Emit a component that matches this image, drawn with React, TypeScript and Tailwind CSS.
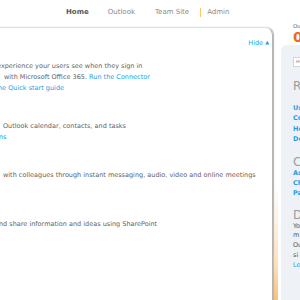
import React from "react";

const link = "text-[#1e9ede]";

function Line({ ml, children }: { ml: string; children: React.ReactNode }) {
  return <div className={`whitespace-nowrap h-[11px] leading-[11px] ${ml}`}>{children}</div>;
}

export default function App() {
  return (
    <div
      className="relative w-[300px] h-[300px] overflow-hidden bg-white text-[#5f5f5f]"
      style={{ fontFamily: '"DejaVu Sans", Verdana, sans-serif' }}
    >
      {/* top nav */}
      <div className="flex items-center h-[22px] pl-[66px] pt-[2px] text-[7px] leading-[10px] text-[#8a8a8a]">
        <span className="font-bold text-[#5a5a5a]">Home</span>
        <span className="ml-[19px]">Outlook</span>
        <span className="ml-[20px]">Team Site</span>
        <span className="ml-[11px] w-[1px] h-[9px] bg-[#f6c66e]" />
        <span className="ml-[6px]">Admin</span>
      </div>

      <div className="flex items-start">
        {/* main card */}
        <div className="relative shrink-0 mt-[5px] ml-[-10px] w-[283px] h-[300px] border-t border-r border-t-[#dedede] border-r-[#b4b4b4] rounded-tr-[8px] shadow-[1px_0_1px_rgba(0,0,0,0.3)] text-[6.5px] pl-[10px]">
          <div className="flex justify-end pr-[3px] pt-[9px] h-[20px] leading-[11px]">
            <span className={link}>
              Hide <span className="text-[5px] align-[1px]">▲</span>
            </span>
          </div>
          <div className="mt-[13px]">
            <Line ml="ml-[-3px]">experience your users see when they sign in</Line>
            <Line ml="ml-[4px]">
              with Microsoft Office 365. <span className={link}>Run the Connector</span>
            </Line>
            <Line ml="ml-[-2px]">
              <span className={link}>he Quick start guide</span>
            </Line>
          </div>
          <div className="mt-[27px]">
            <Line ml="ml-[3px]">Outlook calendar, contacts, and tasks</Line>
            <Line ml="ml-[-1px]">
              <span className={link}>ns</span>
            </Line>
          </div>
          <div className="mt-[27px]">
            <Line ml="ml-[3px]">with colleagues through instant messaging, audio, video and online meetings</Line>
          </div>
          <div className="mt-[38px]">
            <Line ml="ml-[-1px]">nd share information and ideas using SharePoint</Line>
          </div>
          {/* orange fade on right edge */}
          <div className="absolute right-[-6px] top-[155px] w-[5px] h-[160px] bg-gradient-to-b from-[rgba(252,214,150,0)] via-[rgba(250,190,110,0.45)] to-[#f7962a]" />
        </div>

        {/* right column */}
        <div className="ml-[8px] w-[40px] shrink-0">
          <div className="pl-[12px] text-[5.5px] leading-[7px] text-[#555] mt-[1px]">Ou</div>
          <div className="pl-[12px] text-[14px] leading-[14px] font-bold text-[#ec6a1c]">0</div>
          <div className="mt-[1px] bg-[#eef2f6] rounded-tl-[6px] h-[260px] pl-[12px] pt-[12px]">
            <div className="h-[10px] bg-white border border-[#d4d4d4] text-[4.5px] leading-[8px] pl-[2px] text-[#888]">Ht</div>
            <div className="mt-[13px] text-[12px] leading-[12px] text-[#9a9a9a]">Re</div>
            <div className={`mt-[11px] text-[6.5px] font-bold leading-[10.3px] ${link}`}>
              <div>Us</div>
              <div>Co</div>
              <div>Ho</div>
              <div>Do</div>
            </div>
            <div className="mt-[12px] text-[12px] leading-[12px] text-[#9a9a9a]">C</div>
            <div className={`mt-[1px] text-[6.5px] font-bold leading-[9.8px] ${link}`}>
              <div>As</div>
              <div>Ch</div>
              <div>Pa</div>
            </div>
            <div className="mt-[10px] text-[12px] leading-[12px] text-[#9a9a9a]">D</div>
            <div className="mt-[1px] text-[6.5px] leading-[9.8px] text-[#555]">
              <div>Yo</div>
              <div>m</div>
              <div>Ou</div>
              <div>si</div>
              <div className={link}>Le</div>
            </div>
          </div>
        </div>
      </div>
    </div>
  );
}
